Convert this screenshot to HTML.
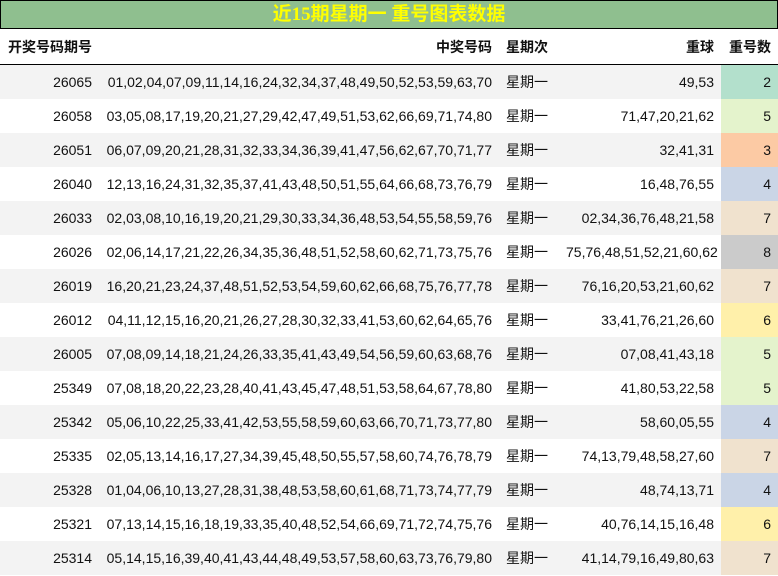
<!DOCTYPE html><html><head><meta charset="utf-8"><style>
body{margin:0;width:778px;height:576px;overflow:hidden;background:#fff;font-family:"Liberation Sans","Noto Sans CJK SC",sans-serif;}
.t{position:absolute;left:0;top:0;width:776px;height:27px;background:#8fbf8f;border:1px solid #000;text-align:center;color:#ffff00;font-family:"Liberation Serif","Noto Sans CJK SC",serif;font-weight:bold;font-size:19px;line-height:28px;}
table{position:absolute;left:0;top:29px;border-collapse:collapse;width:778px;font-size:14px;color:#111;table-layout:fixed;}
td{padding:1px 0 0 0;height:33px;white-space:nowrap;box-sizing:border-box;}
tr{height:34px}
th{height:35px;font-weight:bold;font-size:14px;border-bottom:1.5px solid #000;padding:0;}
.r{text-align:right}
tr.g td{background:#f3f3f3}
td.c{padding-right:7px}
</style></head><body>
<div class="t">近15期星期一 重号图表数据</div>
<table>
<colgroup><col style="width:92px"><col style="width:400px"><col style="width:14px"><col style="width:60px"><col style="width:148px"><col style="width:7px"><col style="width:57px"></colgroup>
<tr style="height:35px"><th class="r">开奖号码期号</th><th class="r">中奖号码</th><th></th><th style="text-align:left">星期次</th><th class="r">重球</th><th></th><th class="r" style="padding-right:7px">重号数</th></tr>
<tr class="g"><td class="r">26065</td><td class="r">01,02,04,07,09,11,14,16,24,32,34,37,48,49,50,52,53,59,63,70</td><td></td><td>星期一</td><td class="r">49,53</td><td></td><td class="r c" style="background:#b3e0cc">2</td></tr>
<tr><td class="r">26058</td><td class="r">03,05,08,17,19,20,21,27,29,42,47,49,51,53,62,66,69,71,74,80</td><td></td><td>星期一</td><td class="r">71,47,20,21,62</td><td></td><td class="r c" style="background:#e4f3cc">5</td></tr>
<tr class="g"><td class="r">26051</td><td class="r">06,07,09,20,21,28,31,32,33,34,36,39,41,47,56,62,67,70,71,77</td><td></td><td>星期一</td><td class="r">32,41,31</td><td></td><td class="r c" style="background:#fccaa4">3</td></tr>
<tr><td class="r">26040</td><td class="r">12,13,16,24,31,32,35,37,41,43,48,50,51,55,64,66,68,73,76,79</td><td></td><td>星期一</td><td class="r">16,48,76,55</td><td></td><td class="r c" style="background:#cad5e6">4</td></tr>
<tr class="g"><td class="r">26033</td><td class="r">02,03,08,10,16,19,20,21,29,30,33,34,36,48,53,54,55,58,59,76</td><td></td><td>星期一</td><td class="r">02,34,36,76,48,21,58</td><td></td><td class="r c" style="background:#f0e2ce">7</td></tr>
<tr><td class="r">26026</td><td class="r">02,06,14,17,21,22,26,34,35,36,48,51,52,58,60,62,71,73,75,76</td><td></td><td>星期一</td><td class="r">75,76,48,51,52,21,60,62</td><td></td><td class="r c" style="background:#cbcbcb">8</td></tr>
<tr class="g"><td class="r">26019</td><td class="r">16,20,21,23,24,37,48,51,52,53,54,59,60,62,66,68,75,76,77,78</td><td></td><td>星期一</td><td class="r">76,16,20,53,21,60,62</td><td></td><td class="r c" style="background:#f0e2ce">7</td></tr>
<tr><td class="r">26012</td><td class="r">04,11,12,15,16,20,21,26,27,28,30,32,33,41,53,60,62,64,65,76</td><td></td><td>星期一</td><td class="r">33,41,76,21,26,60</td><td></td><td class="r c" style="background:#fff0aa">6</td></tr>
<tr class="g"><td class="r">26005</td><td class="r">07,08,09,14,18,21,24,26,33,35,41,43,49,54,56,59,60,63,68,76</td><td></td><td>星期一</td><td class="r">07,08,41,43,18</td><td></td><td class="r c" style="background:#e4f3cc">5</td></tr>
<tr><td class="r">25349</td><td class="r">07,08,18,20,22,23,28,40,41,43,45,47,48,51,53,58,64,67,78,80</td><td></td><td>星期一</td><td class="r">41,80,53,22,58</td><td></td><td class="r c" style="background:#e4f3cc">5</td></tr>
<tr class="g"><td class="r">25342</td><td class="r">05,06,10,22,25,33,41,42,53,55,58,59,60,63,66,70,71,73,77,80</td><td></td><td>星期一</td><td class="r">58,60,05,55</td><td></td><td class="r c" style="background:#cad5e6">4</td></tr>
<tr><td class="r">25335</td><td class="r">02,05,13,14,16,17,27,34,39,45,48,50,55,57,58,60,74,76,78,79</td><td></td><td>星期一</td><td class="r">74,13,79,48,58,27,60</td><td></td><td class="r c" style="background:#f0e2ce">7</td></tr>
<tr class="g"><td class="r">25328</td><td class="r">01,04,06,10,13,27,28,31,38,48,53,58,60,61,68,71,73,74,77,79</td><td></td><td>星期一</td><td class="r">48,74,13,71</td><td></td><td class="r c" style="background:#cad5e6">4</td></tr>
<tr><td class="r">25321</td><td class="r">07,13,14,15,16,18,19,33,35,40,48,52,54,66,69,71,72,74,75,76</td><td></td><td>星期一</td><td class="r">40,76,14,15,16,48</td><td></td><td class="r c" style="background:#fff0aa">6</td></tr>
<tr class="g"><td class="r">25314</td><td class="r">05,14,15,16,39,40,41,43,44,48,49,53,57,58,60,63,73,76,79,80</td><td></td><td>星期一</td><td class="r">41,14,79,16,49,80,63</td><td></td><td class="r c" style="background:#f0e2ce">7</td></tr>
</table>
</body></html>
